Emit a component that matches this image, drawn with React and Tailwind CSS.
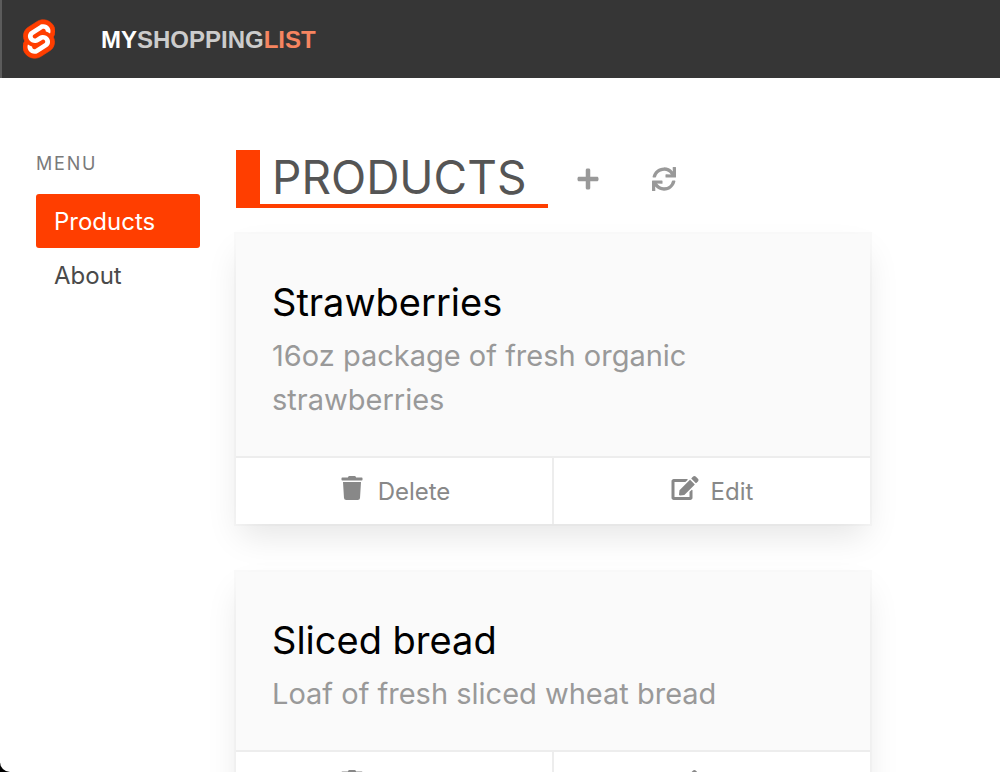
import { FaEdit, FaPlus, FaSync, FaTrash } from "react-icons/fa";

const products = [
  { id: 1, name: "Strawberries", description: "16oz package of fresh organic strawberries" },
  { id: 2, name: "Sliced bread", description: "Loaf of fresh sliced wheat bread" },
];

const Logo = () => (
  <svg viewBox="0 0 98.1 118" className="h-10 w-8" aria-hidden="true">
    <path
      fill="#ff3e00"
      stroke="#ff3e00"
      strokeWidth="2"
      d="M91.8 15.6C80.9-.1 59.2-4.7 43.6 5.2L16.1 22.8C8.6 27.5 3.4 35.2 1.9 43.9c-1.3 7.3-.2 14.8 3.3 21.3-2.4 3.6-4 7.6-4.7 11.8-1.6 8.9.5 18.1 5.7 25.4 11 15.7 32.6 20.3 48.2 10.4l27.5-17.5c7.5-4.7 12.7-12.4 14.2-21.1 1.3-7.3.2-14.8-3.3-21.3 2.4-3.6 4-7.6 4.7-11.8 1.7-9-.4-18.2-5.7-25.5"
    />
    <path
      fill="#fff"
      d="M40.9 103.9c-8.9 2.3-18.2-1.2-23.4-8.7-3.2-4.4-4.4-9.9-3.5-15.3.2-.9.4-1.7.6-2.6l.5-1.6 1.4 1c3.3 2.4 6.9 4.2 10.8 5.4l1 .3-.1 1c-.1 1.4.3 2.9 1.1 4.1 1.6 2.3 4.4 3.4 7.1 2.7.6-.2 1.2-.4 1.7-.7l27.4-17.5c1.4-.9 2.3-2.2 2.6-3.8.3-1.6-.1-3.3-1-4.6-1.6-2.3-4.4-3.3-7.1-2.6-.6.2-1.2.4-1.7.7l-10.5 6.7c-1.7 1.1-3.6 1.9-5.6 2.4-8.9 2.3-18.2-1.2-23.4-8.7-3.1-4.4-4.4-9.9-3.4-15.3.9-5.2 4.1-9.9 8.6-12.7l27.5-17.5c1.7-1.1 3.6-1.9 5.6-2.5 8.9-2.3 18.2 1.2 23.4 8.7 3.2 4.4 4.4 9.9 3.5 15.3-.2.9-.4 1.7-.7 2.6l-.5 1.6-1.4-1c-3.3-2.4-6.9-4.2-10.8-5.4l-1-.3.1-1c.1-1.4-.3-2.9-1.1-4.1-1.6-2.3-4.4-3.3-7.1-2.6-.6.2-1.2.4-1.7.7L32.4 46.1c-1.4.9-2.3 2.2-2.6 3.8s.1 3.3 1 4.6c1.6 2.3 4.4 3.3 7.1 2.6.6-.2 1.2-.4 1.7-.7l10.5-6.7c1.7-1.1 3.6-1.9 5.6-2.5 8.9-2.3 18.2 1.2 23.4 8.7 3.2 4.4 4.4 9.9 3.5 15.3-.9 5.2-4.1 9.9-8.6 12.7l-27.5 17.5c-1.7 1.1-3.6 1.9-5.6 2.5"
    />
  </svg>
);

const ProductCard = ({ product }) => (
  <article className="bg-white shadow-[0_16px_32px_-4px_rgba(10,10,10,0.1),0_0_0_2px_rgba(10,10,10,0.02)]">
    <div className="bg-[#fafafa] px-9 pt-9 pb-[34px]">
      <h2 className="text-[38px] leading-[64px] text-black">{product.name}</h2>
      <p className="text-[29px] leading-[44px] text-[#999]">{product.description}</p>
    </div>
    <footer className="flex border-t-2 border-[#ededed] text-2xl text-[#888]">
      <button
        type="button"
        className="flex flex-1 justify-center gap-3 border-r-2 border-[#ededed] pt-4 pb-3.5 leading-9"
      >
        <FaTrash className="mt-0.5 h-6 w-7" />
        <span>Delete</span>
      </button>
      <button type="button" className="flex flex-1 justify-center gap-3 pt-4 pb-3.5 leading-9">
        <FaEdit className="mt-0.5 h-6 w-7" />
        <span>Edit</span>
      </button>
    </footer>
  </article>
);

const App = () => {
  return (
    <div className="h-screen bg-black">
      <div className="flex h-full flex-col overflow-hidden rounded-bl-[10px] bg-white font-[Inter,sans-serif]">
        <header className="flex h-[78px] shrink-0 items-center gap-[46px] border-l-2 border-[#5c5c5c] bg-[#363636] pl-[21px]">
          <Logo />
          <a href="#home" className="pt-0.5 font-['Liberation_Sans',sans-serif] text-2xl font-bold text-white">
            MY<span className="text-[#ccc]">SHOPPING</span>
            <span className="text-[#f68560]">LIST</span>
          </a>
        </header>

        <div className="flex gap-9 pt-[72px] pr-[13%] pl-9">
          <nav className="w-41 shrink-0 text-2xl text-[#4a4a4a]">
            <p className="mb-4 text-lg leading-7 tracking-widest text-[#7a7a7a]">MENU</p>
            <ul>
              <li>
                <a href="#products" className="block rounded-[3px] bg-[#ff3e00] px-[18px] pt-2.5 pb-2 leading-9 text-white">
                  Products
                </a>
              </li>
              <li>
                <a href="#about" className="block px-[18px] pt-2.5 pb-2 leading-9">
                  About
                </a>
              </li>
            </ul>
          </nav>

          <main className="min-w-0 flex-1">
            <div className="mb-[26px] flex items-center text-[#999]">
              <h1 className="border-b-4 border-l-24 border-[#ff3e00] pr-[22px] pl-3 text-[46px] leading-[54px] text-[#555]">
                PRODUCTS
              </h1>
              <button type="button" aria-label="Add" className="ml-7">
                <FaPlus className="size-6" />
              </button>
              <button type="button" aria-label="Refresh" className="ml-13">
                <FaSync className="size-6" />
              </button>
            </div>

            <div className="flex flex-col gap-12">
              {products.map((product) => (
                <ProductCard key={product.id} product={product} />
              ))}
            </div>
          </main>
        </div>
      </div>
    </div>
  );
};

export default App;
